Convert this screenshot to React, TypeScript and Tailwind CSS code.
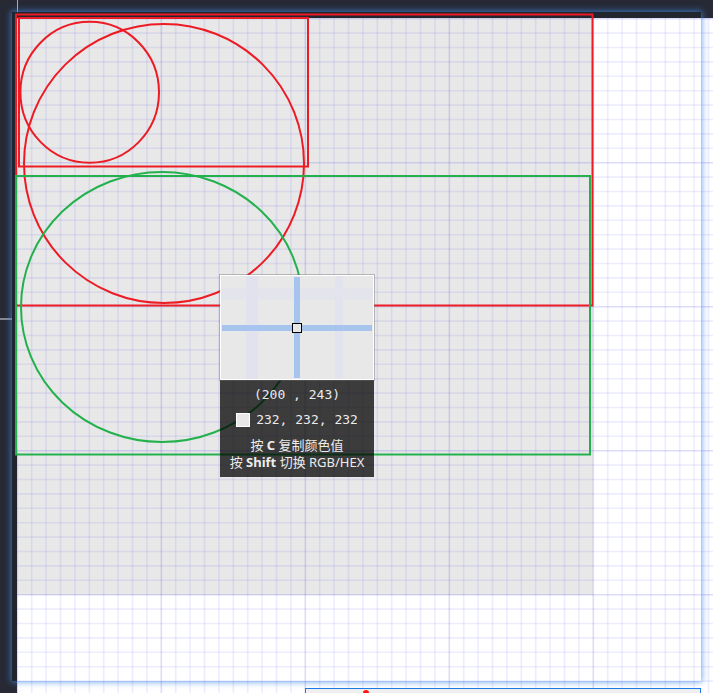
const STEP = 14.4;

const cols = Array.from({ length: 49 }, (_, i) => i);
const rows = Array.from({ length: 48 }, (_, i) => i);

function GridCanvas() {
    return (
        <svg width="696" height="675" className="block">
            <rect x="0" y="0" width="576" height="577" fill="#e8e8e8" />
            {cols.map(i => (
                <line
                    key={'v' + i}
                    x1={0.3 + i * STEP}
                    x2={0.3 + i * STEP}
                    y1="0"
                    y2="675"
                    stroke="rgb(110,110,240)"
                    strokeOpacity={i % 10 === 0 ? 0.24 : 0.12}
                    strokeWidth="1.6"
                />
            ))}
            {rows.map(j => (
                <line
                    key={'h' + j}
                    x1="0"
                    x2="696"
                    y1={0.7 + j * STEP}
                    y2={0.7 + j * STEP}
                    stroke="rgb(110,110,240)"
                    strokeOpacity={j % 10 === 0 ? 0.24 : 0.12}
                    strokeWidth="1.6"
                />
            ))}
        </svg>
    );
}

function Shapes() {
    return (
        <svg width="713" height="693" className="absolute inset-0 pointer-events-none">
            <g fill="none" strokeWidth="2">
                <rect x="16" y="14.5" width="576.5" height="291" stroke="#ed1c24" />
                <rect x="19" y="18" width="289" height="148.5" stroke="#ed1c24" />
                <ellipse cx="89.7" cy="92.3" rx="69.3" ry="70.5" stroke="#ed1c24" />
                <ellipse cx="164" cy="163.5" rx="140" ry="139.5" stroke="#ed1c24" />
                <rect x="16" y="176" width="574" height="278.5" stroke="#22b14c" />
                <ellipse cx="162" cy="307" rx="141" ry="135" stroke="#22b14c" />
            </g>
        </svg>
    );
}

function Magnifier() {
    return (
        <div className="absolute left-[220px] top-[275px] w-[154px] flex flex-col">
            <div className="relative h-[105px] bg-[#e8e8e8] border border-white outline outline-1 outline-[#6a6a6a]/40 overflow-hidden">
                <div className="absolute left-[25px] top-0 bottom-0 w-[12px] bg-[#e2e2ee]" />
                <div className="absolute left-[114px] top-0 bottom-0 w-[8px] bg-[#e3e3ee]" />
                <div className="absolute top-[12px] left-0 right-0 h-[12px] bg-[#e3e3ee]/70" />
                <div className="absolute left-[73px] top-[1px] bottom-[1px] w-[6px] bg-[#a6c4ee]" />
                <div className="absolute top-[49px] left-[1px] right-[1px] h-[6px] bg-[#a6c4ee]" />
                <div className="absolute left-[71px] top-[47px] w-[10px] h-[10px] bg-[#e8e8e8] border border-black" />
            </div>
            <div className="bg-black/[0.74] pt-[7px] pb-[6px] flex flex-col items-center text-[#ececec]">
                <div className="h-[16px] leading-[16px] text-[13px] font-['DejaVu_Sans_Mono',monospace]">(200 , 243)</div>
                <div className="mt-[9px] h-[16px] flex items-center gap-[6px]">
                    <span className="w-[14px] h-[14px] bg-[#e8e8e8] border border-white" />
                    <span className="leading-[16px] text-[13px] font-['DejaVu_Sans_Mono',monospace]">232, 232, 232</span>
                </div>
                <div className="mt-[9px] text-[13px] leading-[17px] font-['Noto_Sans','Noto_Sans_CJK_SC',sans-serif] text-center">
                    <div>按 <b>C</b> 复制颜色值</div>
                    <div>按 <b>Shift</b> 切换 RGB/HEX</div>
                </div>
            </div>
        </div>
    );
}

export default function App() {
    return (
        <div className="relative w-[713px] h-[693px] overflow-hidden bg-[#272a35] flex pl-[17px] pt-[18px]">
            <div className="absolute left-[17px] top-0 h-[12px] w-px bg-[#a6a6e6]" />
            <div className="absolute left-0 top-[318px] w-[15px] h-[2px] bg-[#858892]" />
            <div className="flex-1 bg-white overflow-hidden">
                <GridCanvas />
            </div>
            <div className="absolute left-[12px] top-[12px] w-[689px] h-[669px] border-l-[5px] border-t-[6px] border-[#23252e] shadow-[0_0_6px_1px_rgba(64,140,235,0.75)]" />
            <Shapes />
            <Magnifier />
            <div className="absolute left-[305px] top-[688px] w-[396px] h-[20px] bg-[#efefef] border border-[#1a7ae8]">
                <div className="absolute left-[57px] top-[1px] w-[6px] h-[6px] rounded-full bg-[#ff1414]" />
            </div>
        </div>
    );
}
